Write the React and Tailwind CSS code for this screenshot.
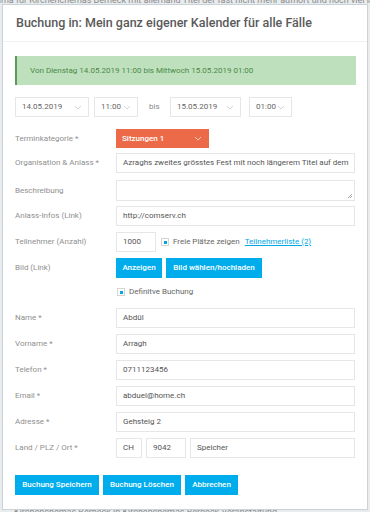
import React from "react";

const font = { fontFamily: "Roboto, 'Liberation Sans', sans-serif" };

function Chevron({ className = "" }) {
  return (
    <svg width="8" height="5" viewBox="0 0 8 5" className={className}>
      <path d="M1 1l3 3 3-3" fill="none" stroke="currentColor" strokeWidth="0.9" />
    </svg>
  );
}

function Select({ value, className = "" }) {
  return (
    <div className={`flex h-[20px] items-center justify-between border border-[#e6e6e6] bg-white pl-[6px] pr-[6px] text-[8px] text-[#666] ${className}`}>
      <span>{value}</span>
      <Chevron className="text-[#cfcfcf]" />
    </div>
  );
}

function Input({ value, className = "w-[239px]" }) {
  return (
    <div className={`flex h-[20px] items-center overflow-hidden whitespace-nowrap border border-[#e6e6e6] bg-white px-[6px] text-[8px] text-[#555] ${className}`}>
      {value}
    </div>
  );
}

function Row({ label, children, className = "" }) {
  return (
    <div className={`flex items-center ${className}`}>
      <div className="w-[101px] shrink-0 text-[8px] text-[#8f8f8f]">{label}</div>
      {children}
    </div>
  );
}

function Check({ label }) {
  return (
    <div className="flex items-center gap-[4px]">
      <div className="flex h-[8px] w-[8px] items-center justify-center border border-[#d4d4d4] bg-white">
        <div className="h-[3px] w-[3px] bg-[#00a8e6]" />
      </div>
      <span className="text-[8px] text-[#666]">{label}</span>
    </div>
  );
}

function BlueButton({ children, className = "" }) {
  return (
    <div className={`flex h-[20px] items-center justify-center whitespace-nowrap bg-[#00adec] text-[8px] font-medium text-white ${className}`}>
      {children}
    </div>
  );
}

export default function App() {
  return (
    <div className="relative h-[512px] w-[370px] overflow-hidden bg-[#e9ecee]" style={font}>
      <div className="absolute left-[-4px] top-[-6px] whitespace-nowrap text-[9px] text-[#8a8a8a]">
        ama für Kirchenchemas Berneck mit allerhand Titel der fast nicht mehr aufhört und noch viel länger ist
      </div>
      <div className="absolute bottom-[-7px] left-[14px] whitespace-nowrap text-[9px] text-[#8a8a8a]">
        Kirchenchemas Berneck in Kirchenchemas Berneck Veranstaltung
      </div>
      <div className="absolute left-[2px] top-[4px] flex h-[506px] w-[366px] flex-col border border-[#c9d3d8] bg-white">
        <div className="flex h-[37px] items-center border-b border-[#f2f2f2] pl-[13px] pt-[1px] text-[12.5px] font-medium text-[#5a5a5a]">
          Buchung in: Mein ganz eigener Kalender für alle Fälle
        </div>
        <div className="flex flex-col pl-[12px] pr-[12px] pt-[14px]">
          <div className="flex h-[29px] w-[341px] items-center border-l-2 border-[#5c9a5c] bg-[#bfe0bd] pl-[13px] text-[8px] text-[#4a8a48]">
            Von Dienstag 14.05.2019 11:00 bis Mittwoch 15.05.2019 01:00
          </div>
          <div className="mt-[12px] flex items-center">
            <Select value="14.05.2019" className="w-[74px]" />
            <Select value="11:00" className="ml-[5px] w-[44px]" />
            <span className="ml-[11px] w-[21px] text-[8px] text-[#888]">bis</span>
            <Select value="15.05.2019" className="w-[71px]" />
            <Select value="01:00" className="ml-[8px] w-[43px]" />
          </div>
          <Row label="Terminkategorie *" className="mt-[12px]">
            <div className="flex h-[19px] w-[93px] items-center justify-between bg-[#ec6a48] pl-[6px] pr-[7px] text-[8px] font-medium text-white">
              <span>Sitzungen 1</span>
              <Chevron className="text-[#fbd3c6]" />
            </div>
          </Row>
          <Row label="Organisation & Anlass *" className="mt-[5px]">
            <Input value="Azraghs zweites grösstes Fest mit noch längerem Titel auf dem" />
          </Row>
          <Row label="Beschreibung" className="mt-[7px]">
            <div className="relative h-[21px] w-[239px] border border-[#e6e6e6]">
              <svg width="6" height="6" viewBox="0 0 6 6" className="absolute bottom-[1px] right-[1px]">
                <path d="M5 1L1 5M5 3L3 5" stroke="#999" strokeWidth="0.8" />
              </svg>
            </div>
          </Row>
          <Row label="Anlass-Infos (Link)" className="mt-[5px]">
            <Input value="http://comserv.ch" />
          </Row>
          <Row label="Teilnehmer (Anzahl)" className="mt-[6px]">
            <Input value="1000" className="w-[40px]" />
            <div className="ml-[5px] flex items-center gap-[5px]">
              <Check label="Freie Plätze zeigen" />
              <span className="text-[8px] text-[#00a8e6] underline">Teilnehmerliste (2)</span>
            </div>
          </Row>
          <Row label="Bild (Link)" className="mt-[6px]">
            <BlueButton className="w-[46px]">Anzeigen</BlueButton>
            <BlueButton className="ml-[4px] w-[96px]">Bild wählen/hochladen</BlueButton>
          </Row>
          <Row label="" className="mt-[8px]">
            <div className="pl-[1px]">
              <Check label="Definitve Buchung" />
            </div>
          </Row>
          <Row label="Name *" className="mt-[10px]">
            <Input value="Abdül" />
          </Row>
          <Row label="Vorname *" className="mt-[6px]">
            <Input value="Arragh" />
          </Row>
          <Row label="Telefon *" className="mt-[6px]">
            <Input value="0711123456" />
          </Row>
          <Row label="Email *" className="mt-[6px]">
            <Input value="abduel@home.ch" />
          </Row>
          <Row label="Adresse *" className="mt-[6px]">
            <Input value="Gehsteig 2" />
          </Row>
          <Row label="Land / PLZ / Ort *" className="mt-[6px]">
            <Input value="CH" className="w-[26px]" />
            <Input value="9042" className="ml-[4px] w-[40px]" />
            <Input value="Speicher" className="ml-[4px] w-[165px]" />
          </Row>
          <div className="mt-[17px] flex items-center gap-[4px]">
            <BlueButton className="w-[84px]">Buchung Speichern</BlueButton>
            <BlueButton className="w-[78px]">Buchung Löschen</BlueButton>
            <BlueButton className="w-[53px]">Abbrechen</BlueButton>
          </div>
        </div>
      </div>
    </div>
  );
}
